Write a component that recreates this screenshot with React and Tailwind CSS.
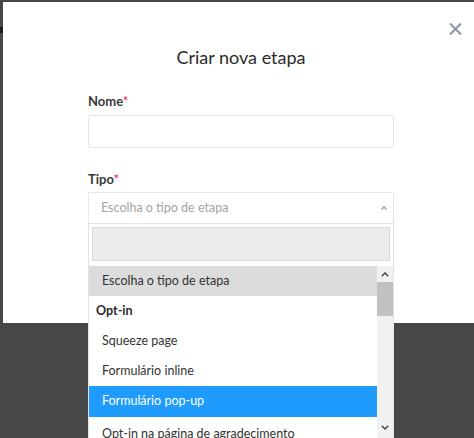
import React from "react";

export default function App() {
  const font = { fontFamily: "Lato, 'Open Sans', sans-serif" };
  return (
    <div
      className="relative w-[474px] h-[438px] overflow-hidden bg-[#474747] pt-[2px] pl-[3px]"
      style={font}
    >
      <div className="absolute left-0 top-[27px] w-[3px] h-[6px] bg-[#1e1e1e]" />
      <div className="relative w-[476px] h-[321px] bg-white">
        <button className="absolute left-[445px] top-[20px] w-[14px] h-[14px] flex items-center justify-center">
          <svg width="13" height="12" viewBox="0 0 13 12">
            <path d="M1 0.5 L12 11.5 M12 0.5 L1 11.5" stroke="#8a949e" strokeWidth="2" />
          </svg>
        </button>
        <div className="pt-[44px] text-center text-[18px] leading-[22px] text-[#2b2b2b]">
          Criar nova etapa
        </div>
        <div className="mx-auto w-[306px] pt-[25px]">
          <div className="text-[13px] leading-[16px] font-bold text-[#3a3a3a]">
            Nome<span className="text-[#e8416e]">*</span>
          </div>
          <div className="mt-[6px] h-[33px] rounded-[3px] border border-[#e6e6e6]" />
          <div className="mt-[23px] text-[13px] leading-[16px] font-bold text-[#3a3a3a]">
            Tipo<span className="text-[#e8416e]">*</span>
          </div>
          <div className="relative mt-[5px] h-[32px] border border-[#e8e8e8] flex items-center pl-[12px] text-[12.5px] text-[#a3a3a3]">
            Escolha o tipo de etapa
            <svg className="absolute right-[6px] top-[13px]" width="6" height="4" viewBox="0 0 6 4">
              <path d="M0.5 3.5 L3 1 L5.5 3.5" stroke="#9a9a9a" strokeWidth="1.3" fill="none" />
            </svg>
            <div className="absolute left-[-1px] top-[30px] w-[306px] bg-white border border-[#e3e3e3] text-[#333]">
              <div className="px-[3px] pt-[3px] pb-[5px]">
                <div className="h-[34px] bg-[#ececec] border border-[#d8d8d8]" />
              </div>
              <div className="flex">
                <div className="flex-1 text-[12.5px]">
                  <div className="h-[30px] flex items-center pl-[13px] bg-[#dcdcdc] text-[#333]">
                    Escolha o tipo de etapa
                  </div>
                  <div className="h-[30px] flex items-center pl-[7px] font-bold text-[#2a2a2a]">
                    Opt-in
                  </div>
                  <div className="h-[30px] flex items-center pl-[13px]">Squeeze page</div>
                  <div className="h-[30px] flex items-center pl-[13px]">Formulário inline</div>
                  <div className="h-[31px] flex items-center pl-[13px] bg-[#1e9bfd] text-white">
                    Formulário pop-up
                  </div>
                  <div className="h-[34px] flex items-center pl-[13px]">
                    Opt-in na página de agradecimento
                  </div>
                </div>
                <div className="w-[16px] bg-[#f1f1f1] flex flex-col items-center">
                  <div className="h-[16px] flex items-center justify-center">
                    <svg width="8" height="5" viewBox="0 0 8 5">
                      <path d="M0.8 4.2 L4 1 L7.2 4.2" stroke="#505050" strokeWidth="1.6" fill="none" />
                    </svg>
                  </div>
                  <div className="w-[16px] h-[34px] bg-[#c1c1c1]" />
                  <div className="h-[103px]" />
                  <div className="h-[16px] flex items-center justify-center">
                    <svg width="8" height="5" viewBox="0 0 8 5">
                      <path d="M0.8 0.8 L4 4 L7.2 0.8" stroke="#505050" strokeWidth="1.6" fill="none" />
                    </svg>
                  </div>
                </div>
              </div>
            </div>
          </div>
        </div>
      </div>
    </div>
  );
}
